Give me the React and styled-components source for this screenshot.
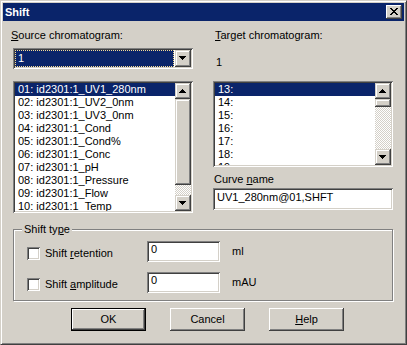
import React from "react";
import styled, { createGlobalStyle } from "styled-components";

const GlobalStyle = createGlobalStyle`
  html, body {
    margin: 0;
    padding: 0;
    background: #d4d0c8;
  }
  * {
    box-sizing: border-box;
  }
  body {
    font-family: "Liberation Sans", Arial, sans-serif;
    font-size: 11px;
    color: #000;
  }
`;

const sourceItems = [
  "01: id2301:1_UV1_280nm",
  "02: id2301:1_UV2_0nm",
  "03: id2301:1_UV3_0nm",
  "04: id2301:1_Cond",
  "05: id2301:1_Cond%",
  "06: id2301:1_Conc",
  "07: id2301:1_pH",
  "08: id2301:1_Pressure",
  "09: id2301:1_Flow",
  "10: id2301:1_Temp",
];

const targetItems = ["13:", "14:", "15:", "16:", "17:", "18:", "19:"];

const raised = `
  box-shadow: inset -1px -1px #404040, inset 1px 1px #d4d0c8,
    inset -2px -2px #808080, inset 2px 2px #fff;
`;

const sunken = `
  box-shadow: inset 1px 1px #808080, inset -1px -1px #fff,
    inset 2px 2px #404040, inset -2px -2px #d4d0c8;
`;

const Window = styled.div`
  width: 407px;
  height: 345px;
  background: #d4d0c8;
  border: 1px solid;
  border-color: #d4d0c8 #404040 #404040 #d4d0c8;
  box-shadow: inset 1px 1px #fff, inset -1px -1px #808080;
  padding: 2px;
  display: flex;
  flex-direction: column;
`;

const TitleBar = styled.div`
  height: 18px;
  background: #0a246a;
  display: flex;
  align-items: center;
  justify-content: space-between;
  padding: 0 2px;
`;

const Title = styled.span`
  color: #fff;
  font-weight: bold;
  font-size: 11px;
  line-height: 13px;
`;

const CloseButton = styled.div`
  width: 16px;
  height: 14px;
  background: #d4d0c8;
  box-shadow: inset -1px -1px #404040, inset 1px 1px #fff,
    inset -2px -2px #808080, inset 2px 2px #d4d0c8;
  display: flex;
`;

const Body = styled.div`
  flex: 1;
  display: flex;
  flex-direction: column;
  padding: 8px 10px 11px 10px;
`;

const Columns = styled.div`
  display: flex;
  gap: 20px;
  align-items: flex-start;
`;

const Column = styled.div`
  width: 180px;
  display: flex;
  flex-direction: column;
`;

const Label = styled.div`
  line-height: 13px;
  white-space: nowrap;
  margin-left: ${(p) => p.$indent || 0}px;
  margin-top: ${(p) => p.$top || 0}px;
`;

const Combo = styled.div`
  height: 21px;
  margin-top: 6px;
  background: #fff;
  padding: 2px;
  display: flex;
  ${sunken}
`;

const ComboValue = styled.div`
  flex: 1;
  margin-right: 1px;
  background: #0a246a;
  border: 1px dotted #f5db95;
  color: #fff;
  line-height: 13px;
  padding: 1px 0 0 2px;
`;

const ArrowButton = styled.div`
  width: 16px;
  height: ${(p) => p.$height || 16}px;
  flex: none;
  background: #d4d0c8;
  display: flex;
  ${raised}
`;

const ListBox = styled.div`
  height: ${(p) => p.$height}px;
  margin-top: 12px;
  background: #fff;
  padding: 2px;
  display: flex;
  ${sunken}
`;

const Items = styled.div`
  flex: 1;
  overflow: hidden;
`;

const Item = styled.div`
  height: 13px;
  line-height: 13px;
  padding-left: 3px;
  white-space: nowrap;
  background: ${(p) => (p.$selected ? "#0a246a" : "transparent")};
  color: ${(p) => (p.$selected ? "#fff" : "#000")};
`;

const ScrollBar = styled.div`
  width: 16px;
  display: flex;
  flex-direction: column;
`;

const Thumb = styled.div`
  height: ${(p) => p.$height}px;
  flex: none;
  background: #d4d0c8;
  ${raised}
`;

const Track = styled.div`
  flex: 1;
  background-color: #d4d0c8;
  background-image: conic-gradient(
    #fff 0 25%,
    transparent 0 50%,
    #fff 0 75%,
    transparent 0
  );
  background-size: 2px 2px;
`;

const TextField = styled.div`
  height: ${(p) => p.$height || 21}px;
  width: ${(p) => (p.$width ? `${p.$width}px` : "auto")};
  margin-top: ${(p) => p.$top || 0}px;
  background: #fff;
  line-height: 13px;
  padding: ${(p) => p.$padTop || 2}px 4px 0 4px;
  white-space: nowrap;
  flex: none;
  ${sunken}
`;

const Group = styled.fieldset`
  margin: 10px 0 0 0;
  padding: 0;
  min-width: 0;
  width: 380px;
  border: 1px solid #808080;
  box-shadow: inset 1px 1px #fff, 1px 1px #fff;
`;

const Legend = styled.legend`
  margin-left: 8px;
  padding: 0 2px;
  line-height: 13px;
  background: #d4d0c8;
`;

const GroupBody = styled.div`
  display: flex;
  flex-direction: column;
  gap: 10px;
  padding: 5px 0 7px 13px;
`;

const Row = styled.div`
  height: 21px;
  display: flex;
  align-items: flex-start;
`;

const CheckField = styled.div`
  width: 120px;
  margin-top: 6px;
  display: flex;
  align-items: flex-start;
  gap: 5px;
`;

const CheckBox = styled.div`
  width: 13px;
  height: 13px;
  flex: none;
  background: #fff;
  ${sunken}
`;

const Unit = styled.div`
  margin: 4px 0 0 12px;
  line-height: 13px;
`;

const ButtonRow = styled.div`
  display: flex;
  gap: 24px;
  margin: 7px 0 0 58px;
`;

const PushButton = styled.div`
  width: 75px;
  height: 23px;
  background: #d4d0c8;
  display: flex;
  align-items: center;
  justify-content: center;
  line-height: 13px;
  border: ${(p) => (p.$default ? "1px solid #000" : "none")};
  box-shadow: inset -1px -1px #404040, inset 1px 1px #fff,
    inset -2px -2px #808080, inset 2px 2px #d4d0c8;
`;

const DownArrow = () => (
  <svg width="16" height="16" viewBox="0 0 16 16" shapeRendering="crispEdges">
    <path d="M4 6h7v1h-7zM5 7h5v1h-5zM6 8h3v1h-3zM7 9h1v1h-1z" fill="#000" />
  </svg>
);

const UpArrow = () => (
  <svg width="16" height="16" viewBox="0 0 16 16" shapeRendering="crispEdges">
    <path d="M7 6h1v1h-1zM6 7h3v1h-3zM5 8h5v1h-5zM4 9h7v1h-7z" fill="#000" />
  </svg>
);

const CloseGlyph = () => (
  <svg width="16" height="14" viewBox="0 0 16 14" shapeRendering="crispEdges">
    <path
      d="M4 3h2v1h-2zM10 3h2v1h-2zM5 4h2v1h-2zM9 4h2v1h-2zM6 5h4v1h-4zM7 6h2v1h-2zM6 7h4v1h-4zM5 8h2v1h-2zM9 8h2v1h-2zM4 9h2v1h-2zM10 9h2v1h-2z"
      fill="#000"
    />
  </svg>
);

const List = ({ items, height, thumb }) => (
  <ListBox $height={height}>
    <Items>
      {items.map((t, i) => (
        <Item key={t} $selected={i === 0}>
          {t}
        </Item>
      ))}
    </Items>
    <ScrollBar>
      <ArrowButton>
        <UpArrow />
      </ArrowButton>
      <Thumb $height={thumb} />
      <Track />
      <ArrowButton>
        <DownArrow />
      </ArrowButton>
    </ScrollBar>
  </ListBox>
);

export default function App() {
  return (
    <>
      <GlobalStyle />
      <Window>
        <TitleBar>
          <Title>Shift</Title>
          <CloseButton>
            <CloseGlyph />
          </CloseButton>
        </TitleBar>
        <Body>
          <Columns>
            <Column>
              <Label $indent={-2}>
                <u>S</u>ource chromatogram:
              </Label>
              <Combo>
                <ComboValue>1</ComboValue>
                <ArrowButton $height={17}>
                  <DownArrow />
                </ArrowButton>
              </Combo>
              <List items={sourceItems} height={132} thumb={86} />
            </Column>
            <Column>
              <Label $indent={2}>
                <u>T</u>arget chromatogram:
              </Label>
              <Label $indent={3} $top={14}>
                1
              </Label>
              <List items={targetItems} height={86} thumb={8} />
              <Label $indent={1} $top={6}>
                Curve <u>n</u>ame
              </Label>
              <TextField $height={22} $top={2} $padTop={3}>
                UV1_280nm@01,SHFT
              </TextField>
            </Column>
          </Columns>
          <Group>
            <Legend>
              Shift ty<u>p</u>e
            </Legend>
            <GroupBody>
              <Row>
                <CheckField>
                  <CheckBox />
                  <Label>
                    Shift <u>r</u>etention
                  </Label>
                </CheckField>
                <TextField $width={73}>0</TextField>
                <Unit>ml</Unit>
              </Row>
              <Row>
                <CheckField>
                  <CheckBox />
                  <Label>
                    Shift <u>a</u>mplitude
                  </Label>
                </CheckField>
                <TextField $width={73}>0</TextField>
                <Unit>mAU</Unit>
              </Row>
            </GroupBody>
          </Group>
          <ButtonRow>
            <PushButton $default>OK</PushButton>
            <PushButton>Cancel</PushButton>
            <PushButton>
              <u>H</u>elp
            </PushButton>
          </ButtonRow>
        </Body>
      </Window>
    </>
  );
}
